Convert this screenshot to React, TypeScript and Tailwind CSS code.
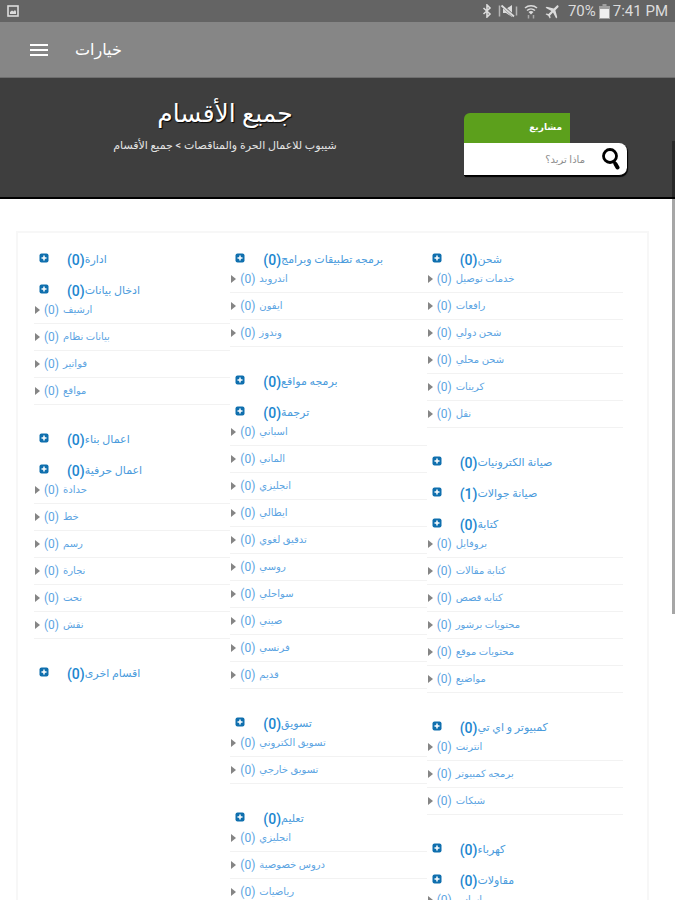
import { MdAirplanemodeActive } from 'react-icons/md'

type Category = {
  name: string
  count: number
  items?: string[]
}

const COLUMNS: Category[][] = [
  [
    { name: 'ادارة', count: 0 },
    { name: 'ادخال بيانات', count: 0, items: ['ارشيف', 'بيانات نظام', 'فواتير', 'مواقع'] },
    { name: 'اعمال بناء', count: 0 },
    { name: 'اعمال حرفية', count: 0, items: ['حدادة', 'خط', 'رسم', 'نجارة', 'نحت', 'نقش'] },
    { name: 'اقسام اخرى', count: 0 },
  ],
  [
    { name: 'برمجه تطبيقات وبرامج', count: 0, items: ['اندرويد', 'ايفون', 'وندوز'] },
    { name: 'برمجه مواقع', count: 0 },
    {
      name: 'ترجمة',
      count: 0,
      items: ['اسباني', 'الماني', 'انجليزي', 'ايطالي', 'تدقيق لغوي', 'روسي', 'سواحلي', 'صيني', 'فرنسي', 'قديم'],
    },
    { name: 'تسويق', count: 0, items: ['تسويق الكتروني', 'تسويق خارجي'] },
    { name: 'تعليم', count: 0, items: ['انجليزي', 'دروس خصوصية', 'رياضيات'] },
  ],
  [
    { name: 'شحن', count: 0, items: ['خدمات توصيل', 'رافعات', 'شحن دولي', 'شحن محلي', 'كرينات', 'نقل'] },
    { name: 'صيانة الكترونيات', count: 0 },
    { name: 'صيانة جوالات', count: 1 },
    {
      name: 'كتابة',
      count: 0,
      items: ['بروفايل', 'كتابة مقالات', 'كتابه قصص', 'محتويات برشور', 'محتويات موقع', 'مواضيع'],
    },
    { name: 'كمبيوتر و اي تي', count: 0, items: ['انترنت', 'برمجه كمبيوتر', 'شبكات'] },
    { name: 'كهرباء', count: 0 },
    { name: 'مقاولات', count: 0, items: ['اساس'] },
  ],
]

function PictureIcon() {
  return (
    <svg width="12" height="12" viewBox="0 0 12 12">
      <rect x="1" y="1" width="10" height="10" fill="none" stroke="#dcdcdc" strokeWidth="1.600" />
      <path d="M3 9V7l2-1.500 1.500 1L8 5l1 1.500V9z" fill="#dcdcdc" />
    </svg>
  )
}

function BluetoothIcon() {
  return (
    <svg width="10" height="14" viewBox="0 0 10 14" fill="none" stroke="#dcdcdc" strokeWidth="1.600">
      <path d="M1.500 4l6.500 6-3 3V1l3 3-6.500 6" />
    </svg>
  )
}

function MutedIcon() {
  return (
    <svg width="20" height="14" viewBox="0 0 20 14">
      <path d="M1.500 1.500v11M18.500 2.500v9" stroke="#b4b4b4" strokeWidth="1.500" />
      <path d="M5 5h3l6-4v12L8 9H5z" fill="#dcdcdc" />
      <path d="M4 1.500l12 11" stroke="#646464" strokeWidth="3" />
      <path d="M3.500 1.500l12.500 11" stroke="#dcdcdc" strokeWidth="1.800" />
    </svg>
  )
}

// Wi-Fi fan with the up/down traffic arrows below it
function WifiIcon() {
  return (
    <svg width="14" height="15" viewBox="0 0 14 15" fill="none" stroke="#dcdcdc">
      <path d="M1 4a9 9 0 0 1 12 0M3 6.500a6 6 0 0 1 8 0" strokeWidth="1.500" />
      <path d="M4.500 8a4 4 0 0 1 5 0L7 10.500z" fill="#dcdcdc" stroke="none" />
      <path d="M4.500 11v3.500M9.500 11v3.500" stroke="#a8a8a8" strokeWidth="1.500" />
    </svg>
  )
}

function BatteryIcon() {
  return (
    <svg width="11" height="15" viewBox="0 0 11 15">
      <path d="M3.500 0h4v2H11v13H0V2h3.500z" fill="#a0a0a0" />
      <path d="M1 5h9v9H1z" fill="#efefef" />
    </svg>
  )
}

function StatusBar() {
  return (
    <div className="flex h-[22px] shrink-0 items-center justify-between bg-[#646464] px-[7px] text-[#dcdcdc]">
      <PictureIcon />
      <div className="flex items-center gap-[6px]">
        <BluetoothIcon />
        <MutedIcon />
        <WifiIcon />
        <MdAirplanemodeActive size={18} className="rotate-45" />
        <div className="flex items-center gap-[3px] text-[15px] leading-5">
          <span>70%</span>
          <BatteryIcon />
          <span>7:41 PM</span>
        </div>
      </div>
    </div>
  )
}

function AppBar() {
  return (
    <header className="flex h-14 shrink-0 items-center gap-[27px] border-b border-[#6e6e6e] bg-[#868686] pl-[30px] text-white">
      <button aria-label="القائمة" className="flex w-[18px] flex-col gap-[3px]">
        <span className="h-[2px] bg-white" />
        <span className="h-[2px] bg-white" />
        <span className="h-[2px] bg-white" />
      </button>
      <h1 dir="rtl" className="text-[16px] leading-6">
        خيارات
      </h1>
    </header>
  )
}

function Search() {
  return (
    <form className="mt-[35px] mr-12 w-[163px] shrink-0">
      <button
        type="button"
        dir="rtl"
        className="block h-[30px] w-[106px] rounded-tl-md bg-[#5ca01c] px-2 text-start text-[9px] font-bold text-white"
      >
        مشاريع
      </button>
      <div className="flex h-[33px] items-center rounded-r-lg border-b border-black bg-white pr-[6px] shadow-[1px_1px_1px_#000]">
        <input
          dir="rtl"
          aria-label="بحث"
          placeholder="ماذا تريد؟"
          className="min-w-0 flex-1 bg-transparent pr-4 text-[10px] text-gray-700 outline-none placeholder:text-[#8c8c8c]"
        />
        <button type="button" aria-label="ابحث" className="shrink-0">
          <svg width="20" height="22" viewBox="0 0 20 22" fill="none" stroke="#000">
            <circle cx="9" cy="8" r="6.500" strokeWidth="2.800" />
            <path d="M12.500 13l2 3" strokeWidth="3" />
            <path d="M14.500 16l2 3.500" strokeWidth="4" strokeLinecap="round" />
          </svg>
        </button>
      </div>
    </form>
  )
}

function Banner() {
  return (
    <section className="flex h-[121px] shrink-0 gap-[14px] border-b-2 border-black bg-[#3e3e3e]">
      <div dir="rtl" className="flex-1 pt-[18px] text-center text-white">
        <h2 className="text-[25px] leading-9 [text-shadow:1px_1px_1px_#000]">جميع الأقسام</h2>
        <nav className="mt-1 text-[11px] leading-5 text-[#e4e4e4]">
          <a href="#home">شيبوب للاعمال الحرة والمناقصات</a> &gt; جميع الأقسام
        </nav>
      </div>
      <Search />
    </section>
  )
}

function PlusIcon() {
  return (
    <svg width="10" height="10" viewBox="0 0 10 10">
      <rect x="0.500" y="0.500" width="9" height="9" rx="2" fill="#0f6fae" />
      <path d="M5 2.500v5M2.500 5h5" stroke="#fff" strokeWidth="1.500" />
    </svg>
  )
}

function CategoryGroup({ category }: { category: Category }) {
  return (
    <section className="mb-[10px]">
      <div className="flex h-[21px] items-center gap-[18px] pl-[5px]">
        <button aria-label={category.name} className="pb-[3px]">
          <PlusIcon />
        </button>
        <a href="#category" className="flex items-center whitespace-nowrap text-[#4a9bdc]">
          <span className="text-[14px] leading-5 font-medium text-[#1c86cf]">({category.count})</span>
          <bdi className="text-[11px] leading-5">{category.name}</bdi>
        </a>
      </div>
      {category.items ? (
        <ul className="mb-6 flex flex-col gap-1">
          {category.items.map((item) => (
            <li key={item} className="flex h-[23px] items-start gap-1 border-b border-[#f2f2f2]">
              <svg width="6" height="18" viewBox="0 0 6 18" fill="#858585">
                <path d="M1 5l5 4-5 4z" />
              </svg>
              <a href="#item" className="flex items-center gap-1 whitespace-nowrap text-[#5ca4e2]">
                <span className="text-[12px] leading-[18px]">(0)</span>
                <bdi className="text-[10px] leading-[18px]">{item}</bdi>
              </a>
            </li>
          ))}
        </ul>
      ) : null}
    </section>
  )
}

export default function App() {
  return (
    <div className="relative flex h-screen flex-col overflow-hidden bg-white font-[Roboto,'DejaVu_Sans',sans-serif]">
      <StatusBar />
      <AppBar />
      <Banner />
      <main className="min-h-0 flex-1 overflow-hidden pt-8 pr-[26px] pl-4">
        <div className="grid min-h-full grid-cols-3 border-2 border-[#f7f7f7] pt-4 pr-6 pl-4">
          {COLUMNS.map((column, i) => (
            <div key={i} className="min-w-0">
              {column.map((category) => (
                <CategoryGroup key={category.name} category={category} />
              ))}
            </div>
          ))}
        </div>
      </main>
      {/* Scroll thumb floats above the page */}
      <div className="absolute top-[141px] right-0 h-[473px] w-[3px] bg-black/35" />
    </div>
  )
}
